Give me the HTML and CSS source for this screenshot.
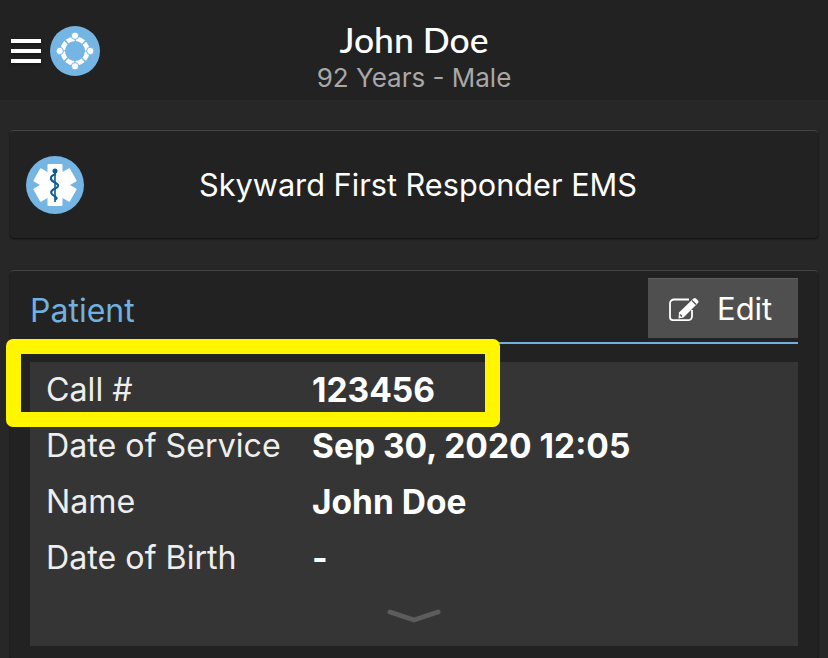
FILE: index.html
```html
<!DOCTYPE html>
<html lang="en">
<head>
	<meta charset="UTF-8">
	<title>Patient</title>
	<link rel="stylesheet" href="styles.css">
</head>
<body>
	<div class="header">
		<div class="menu">
			<span class="bar"></span>
			<span class="bar"></span>
			<span class="bar"></span>
		</div>
		<svg class="logo" viewBox="0 0 50 50">
			<circle cx="25" cy="25" r="25" fill="#74b5e3"/>
			<circle cx="25" cy="25" r="12.300" fill="none" stroke="#fff" stroke-width="4.600" stroke-dasharray="8.200 1.460" stroke-dashoffset="-0.730"/>
			<g fill="#fff" stroke="#74b5e3" stroke-width="1">
				<circle cx="25" cy="9.700" r="3.700"/>
				<circle cx="25" cy="40.300" r="3.700"/>
				<circle cx="9.700" cy="25" r="3.700"/>
				<circle cx="40.300" cy="25" r="3.700"/>
			</g>
		</svg>
		<div class="title">
			<div class="name">John Doe</div>
			<div class="sub">92 Years - Male</div>
		</div>
	</div>

	<div class="card agency">
		<svg class="star" viewBox="0 0 58 58">
			<circle cx="29" cy="29" r="29" fill="#74b5e3"/>
			<g fill="#fff">
				<rect x="21.500" y="8" width="15" height="42" rx="1"/>
				<rect x="21.500" y="8" width="15" height="42" rx="1" transform="rotate(60 29 29)"/>
				<rect x="21.500" y="8" width="15" height="42" rx="1" transform="rotate(120 29 29)"/>
			</g>
			<path d="M29 13v33" stroke="#0f5c94" stroke-width="1.600"/>
			<circle cx="29" cy="15" r="2.500" fill="#0f5c94"/>
			<path d="M30 18c-7 2-6 6-2 8s6 4 2 6-7 4-3 7 5 3 2 5" fill="none" stroke="#0f5c94" stroke-width="2"/>
		</svg>
		<div class="agency-name">Skyward First Responder EMS</div>
	</div>

	<div class="card patient">
		<div class="tab-head">
			<div class="tab-title">Patient</div>
			<div class="edit">
				<svg class="edit-icon" viewBox="0 0 30 24">
					<path d="M20 2.500H5a4 4 0 0 0-4 4V20a3.200 3.200 0 0 0 3.200 3.200H19a4 4 0 0 0 4-4V13" fill="none" stroke="#fff" stroke-width="1.800"/>
					<path d="M10 15.500L24.500 1.500a2 2 0 0 1 2.500 0l2 2a2 2 0 0 1 0 2.500L14.500 20.500 9.500 21.500z" fill="#fff"/>
					<path d="M23 3.500l4 4" stroke="#4f4f4f" stroke-width="1.200"/>
					<path d="M11 17.500l2 2" stroke="#4f4f4f" stroke-width="1.400"/>
				</svg>
				<span>Edit</span>
			</div>
		</div>
		<div class="details">
			<div class="row"><span class="label">Call #</span><span class="value">123456</span></div>
			<div class="row"><span class="label">Date of Service</span><span class="value">Sep 30, 2020 12:05</span></div>
			<div class="row"><span class="label">Name</span><span class="value">John Doe</span></div>
			<div class="row"><span class="label">Date of Birth</span><span class="value">-</span></div>
			<svg class="more" viewBox="0 0 54 14">
				<path d="M3 3l24 8 24-8" fill="none" stroke="#5c5c5c" stroke-width="5" stroke-linecap="round" stroke-linejoin="round"/>
			</svg>
		</div>
	</div>

	<div class="highlight"></div>
</body>
</html>
```

FILE: styles.css
```css
html, body, div, span {
	padding: 0;
	margin: 0;
}
html, body {
	height: 100%;
	overflow: hidden;
}
body {
	background: #272727;
	color: #fff;
	font-family: Inter, "Liberation Sans", sans-serif;
	position: relative;
}
.header {
	height: 100px;
	background: #222;
	display: flex;
	align-items: center;
	padding-left: 11px;
	position: relative;
	margin-bottom: 30px;
}
.menu {
	display: flex;
	flex-direction: column;
	gap: 6px;
	margin-right: 9px;
	margin-top: 1px;
}
.bar {
	display: block;
	width: 30px;
	height: 4px;
	background: #fff;
	box-shadow: 0 2px 3px #181818;
}
.logo {
	width: 50px;
	height: 50px;
	margin-top: 1px;
}
.title {
	position: absolute;
	left: 0;
	right: 0;
	top: 18px;
	text-align: center;
}
.name {
	font-family: Lato, sans-serif;
	font-size: 35.500px;
	font-weight: 500;
	line-height: 44px;
}
.sub {
	font-size: 26px;
	line-height: 32px;
	color: #a8a8a8;
}
.card {
	margin: 0 10px;
	background: #222;
	border-top: 1px solid #444;
	border-radius: 4px;
	box-shadow: 0 1px 2px #0d0d0d;
}
.agency {
	height: 107px;
	display: flex;
	align-items: center;
	padding-left: 16px;
	margin-bottom: 32px;
}
.star {
	width: 58px;
	height: 58px;
}
.agency-name {
	font-size: 30.700px;
	margin-left: 115px;
}
.patient {
	padding: 7px 20px 0;
	height: 381px;
}
.tab-head {
	height: 64px;
	border-bottom: 2px solid #6fb1df;
	display: flex;
	justify-content: space-between;
}
.tab-title {
	font-size: 32px;
	color: #6fb1df;
	line-height: 66px;
}
.edit {
	width: 150px;
	height: 60px;
	background: #4f4f4f;
	border-top: 1px solid #5e5e5e;
	box-sizing: border-box;
	display: flex;
	align-items: center;
	gap: 18px;
	padding-left: 21px;
	font-size: 31px;
}
.edit-icon {
	width: 30px;
	height: 24px;
}
.details {
	margin-top: 18px;
	background: #353535;
	height: 284px;
	display: flex;
	flex-direction: column;
	align-items: flex-start;
	padding-left: 16px;
	box-sizing: border-box;
}
.row {
	height: 56px;
	line-height: 56px;
	display: flex;
	font-size: 32.200px;
}
.label {
	width: 266px;
	color: #eee;
}
.value {
	font-weight: 700;
	font-size: 33.500px;
}
.more {
	width: 54px;
	height: 14px;
	margin: 23px 0 0 341px;
}
.highlight {
	position: absolute;
	left: 6px;
	top: 339px;
	width: 494px;
	height: 88px;
	box-sizing: border-box;
	border: 15px solid #fff600;
	border-radius: 7px;
}
```
